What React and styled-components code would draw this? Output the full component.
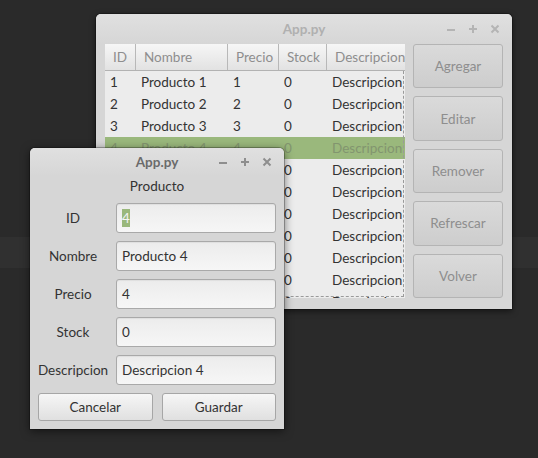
import React from "react";
import styled, { createGlobalStyle } from "styled-components";

const GlobalStyle = createGlobalStyle`
  html, body {
    margin: 0;
    padding: 0;
    background: #2b2b2b;
  }
  body {
    font-family: Lato, "Liberation Sans", sans-serif;
    font-size: 13.5px;
  }
`;

const products = Array.from({ length: 11 }, (_, i) => ({
  id: i + 1,
  nombre: `Producto ${i + 1}`,
  precio: i + 1,
  stock: 0,
  descripcion: `Descripcion ${i + 1}`,
}));

const columns = [
  { key: "id", label: "ID", width: 31 },
  { key: "nombre", label: "Nombre", width: 92 },
  { key: "precio", label: "Precio", width: 51 },
  { key: "stock", label: "Stock", width: 48 },
  { key: "descripcion", label: "Descripcion", width: 90 },
];

const fields = [
  { label: "ID", value: "4", selected: true },
  { label: "Nombre", value: "Producto 4" },
  { label: "Precio", value: "4" },
  { label: "Stock", value: "0" },
  { label: "Descripcion", value: "Descripcion 4" },
];

function WindowControls({ active }) {
  const color = active ? "#8e8e8e" : "#b4b4b4";
  return (
    <S.Controls>
      <svg width="10" height="10" viewBox="0 0 10 10">
        <path d="M1 6h8" stroke={color} strokeWidth="2" />
      </svg>
      <svg width="10" height="10" viewBox="0 0 10 10">
        <path d="M1 5h8M5 1v8" stroke={color} strokeWidth="2" />
      </svg>
      <svg width="10" height="10" viewBox="0 0 10 10">
        <path d="M1.5 1.5l7 7M8.5 1.5l-7 7" stroke={color} strokeWidth="2" />
      </svg>
    </S.Controls>
  );
}

function MainWindow() {
  return (
    <S.Window $left={96} $top={14} $width={416} $height={295}>
      <S.TitleBar $height={30}>
        <S.Title $active={false}>App.py</S.Title>
        <WindowControls active={false} />
      </S.TitleBar>
      <S.MainBody>
        <S.Table>
          <S.HeaderRow>
            {columns.map((c) => (
              <S.HeaderCell key={c.key} $width={c.width}>
                {c.label}
              </S.HeaderCell>
            ))}
          </S.HeaderRow>
          <S.Rows>
            {products.map((p) => (
              <S.Row key={p.id} $selected={p.id === 4}>
                {columns.map((c) => (
                  <S.Cell key={c.key} $width={c.width}>
                    {p[c.key]}
                  </S.Cell>
                ))}
              </S.Row>
            ))}
            <S.FocusRect />
          </S.Rows>
        </S.Table>
        <S.ButtonColumn>
          {["Agregar", "Editar", "Remover", "Refrescar", "Volver"].map((b) => (
            <S.SideButton key={b}>{b}</S.SideButton>
          ))}
        </S.ButtonColumn>
      </S.MainBody>
    </S.Window>
  );
}

function Dialog() {
  return (
    <S.Window $left={30} $top={148} $width={254} $height={281} $front>
      <S.TitleBar $height={28}>
        <S.Title $active>App.py</S.Title>
        <WindowControls active />
      </S.TitleBar>
      <S.Form>
        <S.Heading>Producto</S.Heading>
        {fields.map((f) => (
          <React.Fragment key={f.label}>
            <S.Label>{f.label}</S.Label>
            <S.Input>
              {f.selected ? <S.Selection>{f.value}</S.Selection> : f.value}
            </S.Input>
          </React.Fragment>
        ))}
        <S.Actions>
          <S.DialogButton>Cancelar</S.DialogButton>
          <S.DialogButton>Guardar</S.DialogButton>
        </S.Actions>
      </S.Form>
    </S.Window>
  );
}

export default function App() {
  return (
    <>
      <GlobalStyle />
      <S.Desktop>
        <MainWindow />
        <Dialog />
      </S.Desktop>
    </>
  );
}

const S = {
  Desktop: styled.div`
    position: relative;
    width: 538px;
    height: 458px;
    overflow: hidden;
    background: linear-gradient(
      to bottom,
      #2a2a2a 0,
      #2a2a2a 237px,
      #303030 237px,
      #303030 268px,
      #2a2a2a 268px
    );
  `,
  Window: styled.div`
    position: absolute;
    left: ${({ $left }) => $left}px;
    top: ${({ $top }) => $top}px;
    width: ${({ $width }) => $width}px;
    height: ${({ $height }) => $height}px;
    display: flex;
    flex-direction: column;
    background: #d6d6d6;
    border-radius: 5px 5px 0 0;
    box-shadow: 0 0 0 1px rgba(0, 0, 0, 0.25),
      0 2px ${({ $front }) => ($front ? "10px" : "6px")} rgba(0, 0, 0, 0.55);
    overflow: hidden;
  `,
  TitleBar: styled.div`
    position: relative;
    height: ${({ $height }) => $height}px;
    flex: none;
    display: flex;
    align-items: center;
    justify-content: center;
    background: linear-gradient(to bottom, #e0e0e0, #d6d6d6);
  `,
  Title: styled.div`
    font-weight: 700;
    font-size: 13.5px;
    color: ${({ $active }) => ($active ? "#6b6b6b" : "#b0b0b0")};
  `,
  Controls: styled.div`
    position: absolute;
    right: 12px;
    top: 50%;
    transform: translateY(-50%);
    display: flex;
    gap: 12px;
    & svg {
      display: block;
    }
  `,
  MainBody: styled.div`
    flex: 1;
    display: flex;
    gap: 8px;
    padding: 0 9px 11px 9px;
    min-height: 0;
  `,
  Table: styled.div`
    width: 300px;
    display: flex;
    flex-direction: column;
    background: #ececec;
    overflow: hidden;
  `,
  HeaderRow: styled.div`
    display: flex;
    height: 26px;
    flex: none;
    background: linear-gradient(to bottom, #f6f6f6, #e2e2e2);
    border-bottom: 1px solid #b2b2b2;
  `,
  HeaderCell: styled.div`
    flex: none;
    width: ${({ $width }) => $width}px;
    box-sizing: border-box;
    padding-left: 8px;
    display: flex;
    align-items: center;
    color: #8e8e8e;
    white-space: nowrap;
    overflow: hidden;
    border-right: 1px solid #b8b8b8;
    &:last-child {
      border-right: none;
    }
  `,
  Rows: styled.div`
    position: relative;
    flex: 1;
    overflow: hidden;
  `,
  Row: styled.div`
    display: flex;
    height: 22px;
    align-items: center;
    background: ${({ $selected }) => ($selected ? "#9ab87c" : "transparent")};
    color: ${({ $selected }) => ($selected ? "#82956f" : "#333")};
  `,
  Cell: styled.div`
    flex: none;
    width: ${({ $width }) => $width}px;
    box-sizing: border-box;
    padding-left: 5px;
    white-space: nowrap;
    overflow: hidden;
  `,
  FocusRect: styled.div`
    position: absolute;
    top: 0;
    right: 1px;
    bottom: 1px;
    left: 0;
    border-right: 1px dashed #9a9a9a;
    border-bottom: 1px dashed #9a9a9a;
    pointer-events: none;
  `,
  ButtonColumn: styled.div`
    width: 90px;
    display: flex;
    flex-direction: column;
    gap: 8px;
  `,
  SideButton: styled.button`
    flex: 1;
    font: inherit;
    color: #8e8e8e;
    background: linear-gradient(to bottom, #dadada, #cdcdcd);
    border: 1px solid #b4b4b4;
    border-radius: 3px;
    padding: 0;
  `,
  Form: styled.div`
    flex: 1;
    display: grid;
    grid-template-columns: 70px 160px;
    grid-auto-rows: 30px;
    grid-template-rows: 18px;
    column-gap: 8px;
    row-gap: 8px;
    padding: 1px 8px 8px 8px;
    align-content: start;
  `,
  Heading: styled.div`
    grid-column: 1 / -1;
    text-align: center;
    color: #333;
    line-height: 18px;
  `,
  Label: styled.div`
    display: flex;
    align-items: center;
    justify-content: center;
    color: #333;
    white-space: nowrap;
  `,
  Input: styled.div`
    box-sizing: border-box;
    display: flex;
    align-items: center;
    padding-left: 5px;
    color: #333;
    background: linear-gradient(to bottom, #ececec, #f6f6f6);
    border: 1px solid #a9a9a9;
    border-radius: 3px;
    box-shadow: inset 0 1px 1px rgba(0, 0, 0, 0.06);
  `,
  Selection: styled.span`
    background: #9ab87c;
    color: #f4f4f4;
    line-height: 18px;
  `,
  Actions: styled.div`
    grid-column: 1 / -1;
    display: grid;
    grid-template-columns: 1fr 1fr;
    gap: 9px;
    height: 28px;
  `,
  DialogButton: styled.button`
    font: inherit;
    color: #333;
    background: linear-gradient(to bottom, #f6f6f6, #e0e0e0);
    border: 1px solid #a6a6a6;
    border-radius: 3px;
    padding: 0;
  `,
};
